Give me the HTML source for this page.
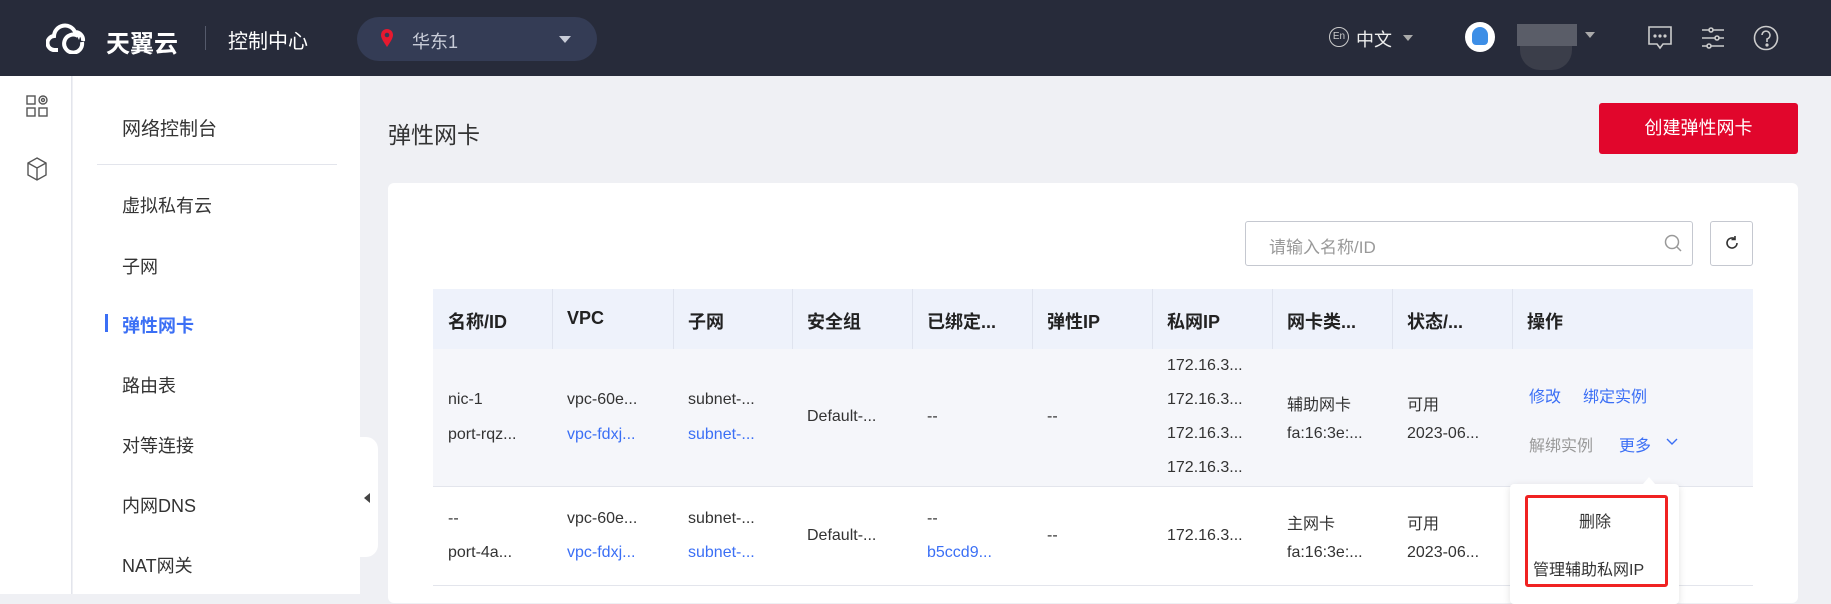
<!DOCTYPE html>
<html><head><meta charset="utf-8"><style>
*{margin:0;padding:0;box-sizing:border-box}
body{width:1831px;height:594px;overflow:hidden;background:#eff0f4;font-family:"Liberation Sans","Noto Sans CJK SC",sans-serif;color:#333;position:relative}
.a{position:absolute;white-space:nowrap}
.hdr{position:absolute;left:0;top:0;width:1831px;height:76px;background:#272b3a}
.th{font-weight:bold;font-size:18px;color:#222}
.td{font-size:16px;color:#333}
.blue{color:#3b6ff5 !important}
.vl{position:absolute;top:289px;width:1px;height:60px;background:#dfe3ee}
</style></head><body>
<div class="hdr"></div>
<svg class="a" style="left:46px;top:22px" width="44" height="32" viewBox="0 0 44 32"><path d="M12 28H9a7 7 0 0 1-1-14 11 11 0 0 1 21-4 8 8 0 0 1 8 9" fill="none" stroke="#fff" stroke-width="4"/><path d="M36 20a9 9 0 1 1-4-6" fill="none" stroke="#fff" stroke-width="4"/><path d="M29 10l6 2-2 6z" fill="#fff"/></svg>
<div class="a" style="left:106px;top:24px;font-size:24px;font-weight:bold;color:#fff">天翼云</div>
<div class="a" style="left:205px;top:26px;width:1px;height:24px;background:#555a6b"></div>
<div class="a" style="left:228px;top:25px;font-size:20px;color:#fff">控制中心</div>
<div class="a" style="left:357px;top:17px;width:240px;height:44px;border-radius:22px;background:#343c55"></div>
<svg class="a" style="left:381px;top:29px" width="12" height="18" viewBox="0 0 12 18"><path d="M6 18C2 12 0 9 0 6a6 6 0 0 1 12 0c0 3-2 6-6 12z" fill="#e6192f"/><circle cx="6" cy="6" r="2.3" fill="#343c55"/></svg>
<div class="a" style="left:412px;top:28px;font-size:18px;color:#c8ccd8">华东1</div>
<div class="a" style="left:559px;top:36px;border:6px solid transparent;border-top:7px solid #c8ccd8;border-bottom:0"></div>
<div class="a" style="left:1329px;top:27px;width:20px;height:20px;border:1.5px solid #ccc;border-radius:50%;font-size:10px;color:#ccc;text-align:center;line-height:17px">En</div>
<div class="a" style="left:1356px;top:26px;font-size:18px;color:#eee">中文</div>
<div class="a" style="left:1403px;top:35px;border:5px solid transparent;border-top:6px solid #aaa;border-bottom:0"></div>
<div class="a" style="left:1465px;top:22px;width:30px;height:30px;border-radius:50%;background:#fff;overflow:hidden"><div style="margin:5px auto 0;width:16px;height:18px;background:#3d8ee6;border-radius:8px 8px 4px 4px"></div></div>
<div class="a" style="left:1517px;top:24px;width:60px;height:22px;background:#5a5d68"></div>
<div class="a" style="left:1520px;top:46px;width:52px;height:24px;background:#3b3e4a;border-radius:0 0 20px 20px"></div>
<div class="a" style="left:1585px;top:32px;border:5px solid transparent;border-top:6px solid #aaa;border-bottom:0"></div>
<svg class="a" style="left:1647px;top:25px" width="26" height="26" viewBox="0 0 26 26" fill="none" stroke="#ccc" stroke-width="1.6"><path d="M2 2h22v17H16l-3 4-3-4H2z"/><circle cx="8" cy="11" r=".8" fill="#ccc"/><circle cx="13" cy="11" r=".8" fill="#ccc"/><circle cx="18" cy="11" r=".8" fill="#ccc"/></svg>
<svg class="a" style="left:1700px;top:25px" width="26" height="26" viewBox="0 0 26 26" fill="none" stroke="#ccc" stroke-width="1.6"><path d="M2 5h7M13 5h11M2 13h13M19 13h5M2 21h5M11 21h13"/><circle cx="11" cy="5" r="2"/><circle cx="17" cy="13" r="2"/><circle cx="9" cy="21" r="2"/></svg>
<svg class="a" style="left:1753px;top:24px" width="26" height="28" viewBox="0 0 26 28" fill="none" stroke="#ccc" stroke-width="1.6"><circle cx="13" cy="14" r="11.5"/><path d="M9 11a4 4 0 1 1 5 4v3"/><circle cx="14" cy="21" r=".8" fill="#ccc"/></svg>

<div class="a" style="left:0;top:76px;width:72px;height:518px;background:#fff;border-right:1px solid #e3e5ec"></div>
<svg class="a" style="left:26px;top:95px" width="22" height="22" viewBox="0 0 22 22" fill="none" stroke="#555" stroke-width="1.4"><rect x="1" y="1" width="8" height="8"/><circle cx="17" cy="5" r="4"/><circle cx="17" cy="5" r="1.5"/><rect x="1" y="13" width="8" height="8"/><rect x="13" y="13" width="8" height="8"/></svg>
<svg class="a" style="left:27px;top:157px" width="20" height="24" viewBox="0 0 20 24" fill="none" stroke="#555" stroke-width="1.4"><path d="M10 1l9 5v12l-9 5-9-5V6zM1 6l9 5 9-5M10 11v12"/></svg>
<div class="a" style="left:73px;top:76px;width:287px;height:518px;background:#fff"></div>
<div class="a" style="left:122px;top:114px;font-size:19px;color:#333">网络控制台</div>
<div class="a" style="left:97px;top:164px;width:240px;height:1px;background:#e3e5ec"></div>
<div class="a" style="left:122px;top:192px;font-size:18px">虚拟私有云</div>
<div class="a" style="left:122px;top:253px;font-size:18px">子网</div>
<div class="a" style="left:105px;top:314px;width:3px;height:18px;background:#3b6ff5"></div>
<div class="a blue" style="left:122px;top:312px;font-size:18px;font-weight:bold">弹性网卡</div>
<div class="a" style="left:122px;top:372px;font-size:18px">路由表</div>
<div class="a" style="left:122px;top:432px;font-size:18px">对等连接</div>
<div class="a" style="left:122px;top:492px;font-size:18px">内网DNS</div>
<div class="a" style="left:122px;top:552px;font-size:18px">NAT网关</div>
<div class="a" style="left:358px;top:437px;width:20px;height:120px;background:#fff;border-radius:0 12px 12px 0"></div>
<div class="a" style="left:364px;top:493px;border:5px solid transparent;border-right:6px solid #444;border-left:0"></div>

<div class="a" style="left:388px;top:116px;font-size:23px;color:#333">弹性网卡</div>
<div class="a" style="left:1599px;top:103px;width:199px;height:51px;background:#e1062c;border-radius:3px;color:#fff;font-size:18px;text-align:center;line-height:51px">创建弹性网卡</div>
<div class="a" style="left:388px;top:183px;width:1410px;height:420px;background:#fff;border-radius:6px"></div>
<div class="a" style="left:1245px;top:221px;width:448px;height:45px;border:1px solid #c5c8d0;border-radius:3px"></div>
<div class="a" style="left:1269px;top:233px;font-size:17px;color:#999">请输入名称/ID</div>
<svg class="a" style="left:1664px;top:234px" width="18" height="20" viewBox="0 0 18 20" fill="none" stroke="#999" stroke-width="1.5"><circle cx="8" cy="8" r="6.5"/><path d="M13 13l4 4"/></svg>
<div class="a" style="left:1710px;top:221px;width:43px;height:45px;border:1px solid #c5c8d0;border-radius:3px"></div>
<svg class="a" style="left:1724px;top:235px" width="16" height="16" viewBox="0 0 16 16" fill="none" stroke="#333" stroke-width="1.6"><path d="M13 8a5 5 0 1 1-2-4"/><path d="M11 1v3.5h-3.5" /></svg>

<div class="a" style="left:433px;top:289px;width:1320px;height:60px;background:#eef2fb"></div>
<div class="a" style="left:433px;top:349px;width:1320px;height:138px;background:#f5f6fa;border-bottom:1px solid #e3e5ec"></div>
<div class="a" style="left:433px;top:585px;width:1320px;height:1px;background:#e3e5ec"></div>
<div class="vl" style="left:552px"></div><div class="vl" style="left:673px"></div><div class="vl" style="left:792px"></div><div class="vl" style="left:912px"></div><div class="vl" style="left:1032px"></div><div class="vl" style="left:1152px"></div><div class="vl" style="left:1272px"></div><div class="vl" style="left:1392px"></div><div class="vl" style="left:1512px"></div>
<div class="a th" style="left:448px;top:308px">名称/ID</div>
<div class="a th" style="left:567px;top:308px">VPC</div>
<div class="a th" style="left:688px;top:308px">子网</div>
<div class="a th" style="left:807px;top:308px">安全组</div>
<div class="a th" style="left:927px;top:308px">已绑定...</div>
<div class="a th" style="left:1047px;top:308px">弹性IP</div>
<div class="a th" style="left:1167px;top:308px">私网IP</div>
<div class="a th" style="left:1287px;top:308px">网卡类...</div>
<div class="a th" style="left:1407px;top:308px">状态/...</div>
<div class="a th" style="left:1527px;top:308px">操作</div>

<div class="a td" style="left:448px;top:391px">nic-1</div>
<div class="a td" style="left:448px;top:426px">port-rqz...</div>
<div class="a td" style="left:567px;top:391px">vpc-60e...</div>
<div class="a td blue" style="left:567px;top:426px">vpc-fdxj...</div>
<div class="a td" style="left:688px;top:391px">subnet-...</div>
<div class="a td blue" style="left:688px;top:426px">subnet-...</div>
<div class="a td" style="left:807px;top:408px">Default-...</div>
<div class="a td" style="left:927px;top:408px">--</div>
<div class="a td" style="left:1047px;top:408px">--</div>
<div class="a td" style="left:1167px;top:357px">172.16.3...</div>
<div class="a td" style="left:1167px;top:391px">172.16.3...</div>
<div class="a td" style="left:1167px;top:425px">172.16.3...</div>
<div class="a td" style="left:1167px;top:459px">172.16.3...</div>
<div class="a td" style="left:1287px;top:391px">辅助网卡</div>
<div class="a td" style="left:1287px;top:425px">fa:16:3e:...</div>
<div class="a td" style="left:1407px;top:391px">可用</div>
<div class="a td" style="left:1407px;top:425px">2023-06...</div>
<div class="a td blue" style="left:1529px;top:383px">修改</div>
<div class="a td blue" style="left:1583px;top:383px">绑定实例</div>
<div class="a td" style="left:1529px;top:432px;color:#999">解绑实例</div>
<div class="a td blue" style="left:1619px;top:432px">更多</div>
<svg class="a" style="left:1666px;top:438px" width="12" height="8" viewBox="0 0 12 8" fill="none" stroke="#3b6ff5" stroke-width="1.4"><path d="M1 1l5 5 5-5"/></svg>

<div class="a td" style="left:448px;top:510px">--</div>
<div class="a td" style="left:448px;top:544px">port-4a...</div>
<div class="a td" style="left:567px;top:510px">vpc-60e...</div>
<div class="a td blue" style="left:567px;top:544px">vpc-fdxj...</div>
<div class="a td" style="left:688px;top:510px">subnet-...</div>
<div class="a td blue" style="left:688px;top:544px">subnet-...</div>
<div class="a td" style="left:807px;top:527px">Default-...</div>
<div class="a td" style="left:927px;top:510px">--</div>
<div class="a td blue" style="left:927px;top:544px">b5ccd9...</div>
<div class="a td" style="left:1047px;top:527px">--</div>
<div class="a td" style="left:1167px;top:527px">172.16.3...</div>
<div class="a td" style="left:1287px;top:510px">主网卡</div>
<div class="a td" style="left:1287px;top:544px">fa:16:3e:...</div>
<div class="a td" style="left:1407px;top:510px">可用</div>
<div class="a td" style="left:1407px;top:544px">2023-06...</div>

<div class="a" style="left:1510px;top:484px;width:169px;height:120px;background:#fff;border-radius:4px;box-shadow:0 2px 8px rgba(0,0,0,.12)"></div>
<div class="a" style="left:1643px;top:477px;border:6px solid transparent;border-bottom:7px solid #fff;border-top:0"></div>
<div class="a" style="left:1525px;top:495px;width:143px;height:92px;border:3px solid #f02222;border-radius:3px"></div>
<div class="a td" style="left:1579px;top:508px">删除</div>
<div class="a td" style="left:1533px;top:556px">管理辅助私网IP</div>
</body></html>
